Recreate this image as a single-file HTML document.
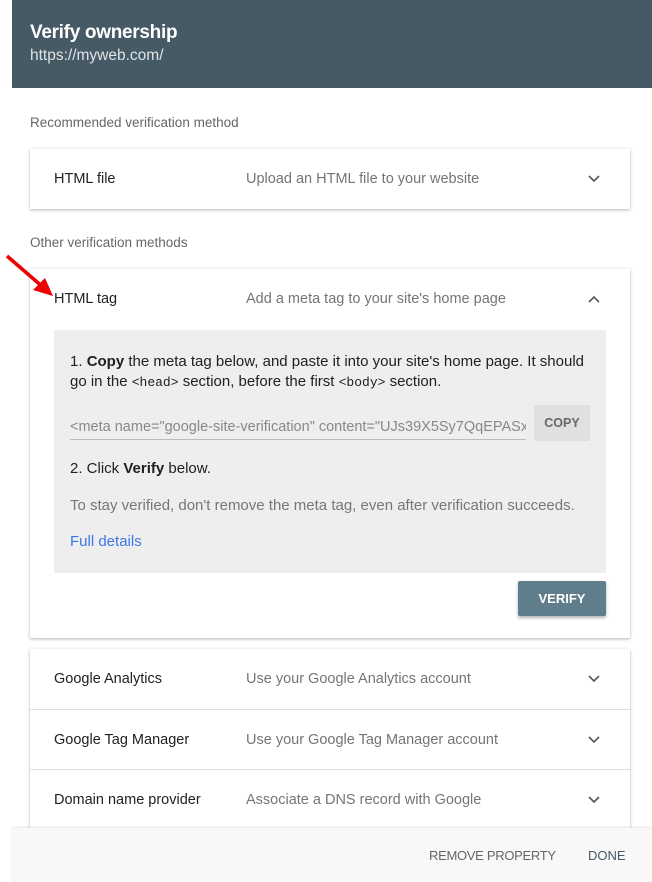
<!DOCTYPE html>
<html><head><style>
*{box-sizing:border-box;margin:0;padding:0}
body{width:652px;height:882px;overflow:hidden;background:#fff;font-family:"Liberation Sans",Arial,sans-serif;position:relative;color:#212121}
.hdr{position:absolute;left:12px;top:0;width:640px;height:88px;background:#465a65;color:#fff}
.hdr h1{position:absolute;left:18px;top:22px;font-size:19px;font-weight:bold;letter-spacing:-0.3px}
.hdr p{position:absolute;left:18px;top:47px;font-size:15.5px;color:#dfe4e7}
.lbl{position:absolute;left:30px;font-size:13.5px;color:#666}
.card{position:absolute;left:30px;width:600px;background:#fff;box-shadow:0 1px 3px rgba(0,0,0,.3)}
.row{position:relative;height:60px;font-size:14.5px}
.row .t{position:absolute;left:24px;top:22px;color:#212121}
.row .d{position:absolute;left:216px;top:22px;color:#757575}
.row svg{position:absolute;left:558px;top:26px}
.sep{border-top:1px solid #ddd}
.gray{position:absolute;left:24px;top:61px;width:552px;height:243px;background:#eee;font-size:15px;color:#212121}
.mono{font-family:"Liberation Mono",monospace;font-size:13px}
.btn{position:absolute;left:488px;top:312px;width:88px;height:35px;background:#607d8b;color:#fff;font-size:13px;font-weight:bold;text-align:center;line-height:35px;border-radius:2px;box-shadow:0 2px 3px rgba(0,0,0,.3)}
.foot{position:absolute;left:12px;top:828px;width:640px;height:54px;background:#f8f8f8;box-shadow:0 -1px 2px rgba(0,0,0,.1);font-size:13px}
</style></head><body>
<div class="hdr"><h1>Verify ownership</h1><p>https://myweb.com/</p></div>
<div class="lbl" style="top:115px">Recommended verification method</div>
<div class="card" style="top:149px"><div class="row"><span class="t">HTML file</span><span class="d">Upload an HTML file to your website</span><svg width="12" height="8" viewBox="0 0 12 8"><path d="M1 1l5 5 5-5" fill="none" stroke="#555" stroke-width="1.6"/></svg></div></div>
<div class="lbl" style="top:235px">Other verification methods</div>
<div class="card" style="top:269px;height:369px">
<div class="row"><span class="t">HTML tag</span><span class="d">Add a meta tag to your site's home page</span><svg width="12" height="8" viewBox="0 0 12 8"><path d="M1 7l5-5 5 5" fill="none" stroke="#555" stroke-width="1.6"/></svg></div>
<div class="gray">
<div style="position:absolute;left:16px;top:22px;width:515px;line-height:20px">1. <b>Copy</b> the meta tag below, and paste it into your site's home page. It should go in the <span class="mono">&lt;head&gt;</span> section, before the first <span class="mono">&lt;body&gt;</span> section.</div>
<div style="position:absolute;left:16px;top:89px;width:456px;height:21px;overflow:hidden;white-space:nowrap;color:#888;font-size:14.5px;border-bottom:1px solid #bbb">&lt;meta name="google-site-verification" content="UJs39X5Sy7QqEPASxxxx" /&gt;</div>
<div style="position:absolute;left:480px;top:75px;width:56px;height:36px;background:#e0e0e0;border-radius:2px;color:#666;font-size:12.5px;font-weight:bold;text-align:center;line-height:36px">COPY</div>
<div style="position:absolute;left:16px;top:130px">2. Click <b>Verify</b> below.</div>
<div style="position:absolute;left:16px;top:167px;color:#777">To stay verified, don't remove the meta tag, even after verification succeeds.</div>
<div style="position:absolute;left:16px;top:203px;color:#3b78e7">Full details</div>
</div>
<div class="btn">VERIFY</div>
</div>
<div class="card" style="top:649px;height:200px">
<div class="row"><span class="t">Google Analytics</span><span class="d">Use your Google Analytics account</span><svg width="12" height="8" viewBox="0 0 12 8"><path d="M1 1l5 5 5-5" fill="none" stroke="#555" stroke-width="1.6"/></svg></div>
<div class="row sep"><span class="t">Google Tag Manager</span><span class="d">Use your Google Tag Manager account</span><svg width="12" height="8" viewBox="0 0 12 8"><path d="M1 1l5 5 5-5" fill="none" stroke="#555" stroke-width="1.6"/></svg></div>
<div class="row sep"><span class="t">Domain name provider</span><span class="d">Associate a DNS record with Google</span><svg width="12" height="8" viewBox="0 0 12 8"><path d="M1 1l5 5 5-5" fill="none" stroke="#555" stroke-width="1.6"/></svg></div>
</div>
<div class="foot"><span style="position:absolute;left:417px;top:20px;color:#666;letter-spacing:-0.3px">REMOVE PROPERTY</span><span style="position:absolute;left:576px;top:20px;color:#455a64">DONE</span></div>
<svg style="position:absolute;left:0;top:250px" width="60" height="50"><path d="M7 6L44 38" stroke="#e00" stroke-width="3.5"/><path d="M53 46L33 40 45 28z" fill="#e00"/></svg>
</body></html>
